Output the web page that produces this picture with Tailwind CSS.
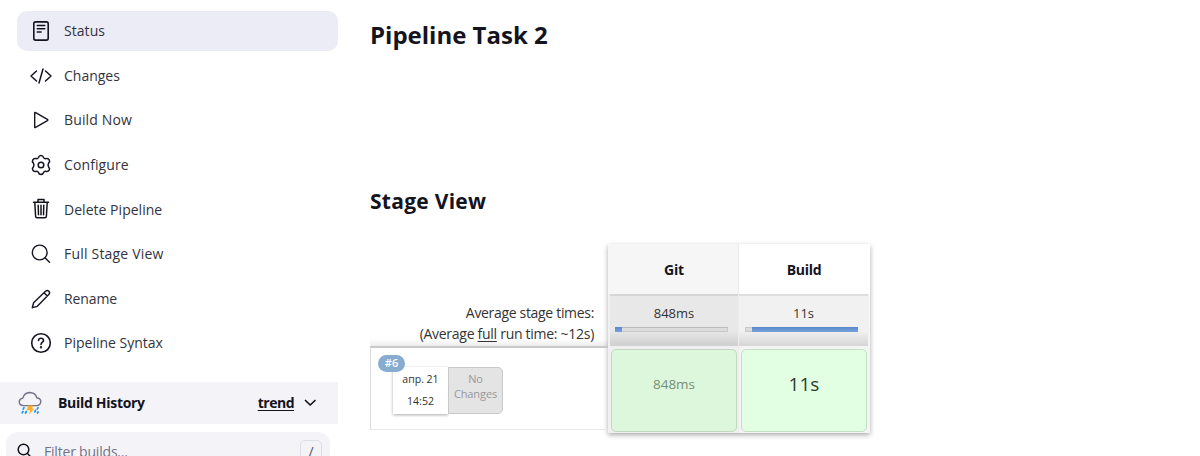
<!DOCTYPE html>
<html lang="en">
<head>
<meta charset="utf-8">
<title>Pipeline Task 2</title>
<script src="https://cdn.jsdelivr.net/npm/@tailwindcss/browser@4"></script>
</head>
<body class="h-[456px] overflow-hidden bg-white font-['Open_Sans','Noto_Sans',sans-serif] text-[#14141f]">
<div class="flex h-[456px] overflow-hidden">
  <aside class="w-[338px] shrink-0 pt-[11px]">
    <nav class="ml-[17px] flex flex-col gap-[4.6px] text-[14px] font-medium text-[#333340]">
      <a class="flex h-10 items-center gap-[11px] rounded-[10px] bg-[#ececf6] pl-3">
        <svg class="size-6 text-[#14141f]" viewBox="0 0 24 24" fill="none" stroke="currentColor" stroke-width="1.6" stroke-linecap="round" stroke-linejoin="round"><rect x="4.8" y="2.9" width="14.4" height="18.2" rx="1.8"/><path d="M8.3 6.5h7.4M8.3 9.7h7.4M8.3 13h3.8"/></svg>
        <span class="pb-px tracking-[0.05px]">Status</span></a>
      <a class="flex h-10 items-center gap-[11px] pl-3">
        <svg class="size-6 text-[#14141f]" viewBox="0 0 24 24" fill="none" stroke="currentColor" stroke-width="1.5" stroke-linecap="round" stroke-linejoin="round"><path d="M7.5 7l-5.5 5 5.5 5M16.5 7l5.5 5-5.500 5M14 5l-4 14"/></svg>
        <span class="tracking-normal">Changes</span></a>
      <a class="flex h-10 items-center gap-[11px] pl-3">
        <svg class="size-6 text-[#14141f]" viewBox="0 0 24 24" fill="none" stroke="currentColor" stroke-width="1.4" stroke-linejoin="round"><path d="M5.7 5.1v13.8q0 1 .9.5l11.8-6.8q.9-.6 0-1.2L6.600 4.600q-.9-.5-.9.5z"/></svg>
        <span class="pb-px tracking-[0.15px]">Build Now</span></a>
      <a class="flex h-10 items-center gap-[11px] pl-3">
        <svg class="size-6 text-[#14141f]" viewBox="0 0 24 24" fill="none" stroke="currentColor" stroke-width="1.5" stroke-linejoin="round"><circle cx="12" cy="12" r="2.800"/><path d="M9.500 4.500Q10 2.500 12 2.500T14.500 4.500Q15.300 6 17 5.600Q19.200 5 20.200 6.800T19.700 9.900Q18.300 12 19.700 14.100Q21.200 15.500 20.200 17.200T17 18.400Q15.300 18 14.500 19.500Q14 21.500 12 21.500T9.500 19.500Q8.700 18 7 18.400Q4.800 19 3.800 17.200T4.300 14.100Q5.700 12 4.300 9.900Q2.800 8.500 3.800 6.800T7 5.600Q8.700 6 9.500 4.500z"/></svg>
        <span class="tracking-[0.1px]">Configure</span></a>
      <a class="flex h-10 items-center gap-[11px] pl-3">
        <svg class="size-6 text-[#14141f]" viewBox="0 0 24 24" fill="none" stroke="currentColor" stroke-width="1.5" stroke-linecap="round" stroke-linejoin="round"><path d="M4.500 5.200h15M9 5V2.600h6V5M5.800 5.500l.8 13.700q.1 1.500 1.500 1.500h7.800q1.400 0 1.500-1.500l.8-13.700M9.200 8.300l.3 9.500M12 8.300v9.500M14.800 8.300l-.3 9.500"/></svg>
        <span class="tracking-[0.03px]">Delete Pipeline</span></a>
      <a class="flex h-10 items-center gap-[11px] pl-3">
        <svg class="size-6 text-[#14141f]" viewBox="0 0 24 24" fill="none" stroke="currentColor" stroke-width="1.4" stroke-linecap="round"><circle cx="10.700" cy="10.500" r="7.400"/><path d="M16.200 16l4.300 4.300"/></svg>
        <span class="tracking-[0.2px]">Full Stage View</span></a>
      <a class="flex h-10 items-center gap-[11px] pl-3">
        <svg class="size-6 text-[#14141f]" viewBox="0 0 24 24" fill="none" stroke="currentColor" stroke-width="1.4" stroke-linecap="round" stroke-linejoin="round"><path d="M3.300 20.700l1.300-5L16.500 4.200Q18.200 2.600 19.900 4.200Q21.400 5.900 19.800 7.500L8.300 19.300zM15 5.700l3.300 3.300"/></svg>
        <span class="tracking-[-0.1px]">Rename</span></a>
      <a class="flex h-10 items-center gap-[11px] pl-3">
        <svg class="size-6 text-[#14141f]" viewBox="0 0 24 24" fill="none" stroke="currentColor" stroke-width="1.600" stroke-linecap="round" stroke-linejoin="round"><circle cx="12" cy="12" r="9.300"/><path d="M9.500 9.500q.2-2.200 2.500-2.200t2.500 2.100c0 1.600-2.500 1.900-2.500 4"/><circle cx="12" cy="16.200" r=".4" fill="currentColor"/></svg>
        <span class="pb-px tracking-normal">Pipeline Syntax</span></a>
    </nav>
    <div class="mt-[19px] flex h-[42px] items-center bg-[#f3f3f8] pl-[18px] pr-5 text-[14px] font-bold">
      <svg class="size-6" viewBox="0 0 24 24" fill="none" stroke-linecap="round" stroke-linejoin="round"><path d="M5.500 14.600Q1.200 14.200 1.200 10.700Q1.500 7.600 4.900 7.100Q6 2 11.700 1.500Q17.500 1.600 18.800 6.800Q22.700 7.500 22.800 10.700Q22.500 14.300 18.500 14.600z" stroke="#737388" stroke-width="1.400"/><path d="M10.200 14.600h5l-1.200 3h2.400l-5.400 5.800 1-4.200H8.500z" fill="#ffae2b"/><path d="M6 16.700l-.8 1.400M4.900 20.500l-.7 1.300M8.300 20.500l-.8 1.500M20 16.700l-.8 1.400M17.500 19.500l-.8 1.400M20 21l-.5 1" stroke="#1697ed" stroke-width="1.700"/></svg>
      <span class="ml-4 pb-0.5 tracking-[-0.3px]">Build History</span>
      <a class="ml-auto pb-0.5 tracking-[-0.5px] underline underline-offset-2">trend</a>
      <svg class="ml-2 size-4" viewBox="0 0 16 16" fill="none" stroke="currentColor" stroke-width="1.700" stroke-linecap="round" stroke-linejoin="round"><path d="M3.500 5.500l4.700 4.500L13 5.500"/></svg>
    </div>
    <div class="ml-1.5 mt-2 flex h-[38px] w-[324px] items-center rounded-t-[12px] bg-[#f3f3f8] pl-2.5 pr-2 text-[14px]">
      <svg class="size-[18px]" viewBox="0 0 18 18" fill="none" stroke="currentColor" stroke-width="1.500" stroke-linecap="round"><circle cx="7.500" cy="7.500" r="5.300"/><path d="M11.500 11.500l3.800 4"/></svg>
      <span class="ml-2.5 tracking-[-0.2px] font-medium text-[#737388]">Filter builds...</span>
      <kbd class="ml-auto flex h-[22px] w-[22px] items-center justify-center rounded-[5px] border border-[#dedee8] font-['Open_Sans',sans-serif] text-[14px] text-[#555566]">/</kbd>
    </div>
  </aside>
  <main class="ml-8 w-[502px] shrink-0">
    <h1 class="mt-[17px] h-9 whitespace-nowrap text-[24px] leading-9 font-bold">Pipeline Task 2</h1>
    <h2 class="mt-[133px] h-8 whitespace-nowrap text-[21px] leading-[30px] font-bold tracking-[0.27px]">Stage View</h2>
    <div class="mt-[26px] flex">
      <div class="w-[238px]">
        <div class="flex h-[102px] flex-col items-end bg-linear-to-b from-white from-93% to-[#ededed] pr-3.5 pt-[58px] text-[14px] leading-[21px] text-[#333]">
          <div class="whitespace-nowrap tracking-[-0.32px]">Average stage times:</div>
          <div class="whitespace-nowrap tracking-[-0.28px]">(Average <span class="underline underline-offset-2">full</span> run time: ~12s)</div>
        </div>
        <div class="relative h-[84px] border-t-2 border-b border-l border-t-[#c8c8c8] border-b-[#e8e8e8] border-l-[#dcdce0] pl-[22px] pt-[19px]">
          <div class="flex h-[47px] w-[110px] text-center">
            <div class="w-[55px] bg-white pt-[3px] text-[10.500px] leading-[22px] text-[#333] shadow-[0_1px_3px_#0005]"><div class="-mt-0.5">апр. 21</div><div>14:52</div></div>
            <div class="w-[55px] rounded-r-[5px] border border-[#c9c9c9] bg-[#e4e4e4] pt-[3px] text-[11px] leading-[15px] tracking-[-0.1px] text-[#999]">No<br>Changes</div>
          </div>
          <span class="absolute left-[7px] top-[7px] flex h-[17px] w-[27px] items-center justify-center rounded-full bg-[#88abd0] text-[11px] font-semibold text-white">#6</span>
        </div>
      </div>
      <div class="flex h-[189px] w-[262px] bg-[#f2f2f2] shadow-[0_2px_5px_#0005]">
        <section class="w-[131px] border-r border-[#ececec] bg-[#f0f0f0] text-center">
          <div class="h-[50px] bg-[#f6f6f6] pl-0.5 text-[14px] leading-[52px] font-bold tracking-[-0.2px]">Git</div>
          <div class="ml-0.5 h-[52px] border-t-2 border-[#d6d6d6] bg-linear-to-b from-[#e8e8e8] from-70% to-[#cfcfcf] pt-[6px] text-[13px] leading-[22px] text-[#333]">848ms
            <div class="ml-[5px] mt-[3px] flex h-[5px] w-[113px] border border-t-[#bbb] border-[#c8c8c8] bg-[#dcdcdc]"><i class="-my-px -ml-px w-[7px] bg-linear-to-b from-[#5788cb] to-[#79a2da]"></i></div>
          </div>
          <div class="ml-[3px] mt-[3px] flex h-[83px] w-[126px] items-center justify-center rounded-[5px] border border-[#bfd8bf] bg-[#ddf7dd] pb-[13px] text-[13.500px] text-[#788f78]">848ms</div>
        </section>
        <section class="w-[131px] bg-[#f4f4f4] text-center">
          <div class="h-[50px] bg-white text-[14px] leading-[52px] font-bold tracking-[-0.3px]"><span class="-ml-px">Build</span></div>
          <div class="mr-0.5 h-[52px] border-t-2 border-[#dedede] bg-linear-to-b from-[#f1f1f1] from-70% to-[#d6d6d6] pt-[6px] text-[13px] leading-[22px] text-[#333]">11s
            <div class="ml-[6px] mt-[3px] flex h-[5px] w-[113px] border border-[#c8c8c8] bg-[#dcdcdc]"><i class="-my-px -mr-px ml-auto w-[106px] bg-linear-to-b from-[#5788cb] to-[#79a2da]"></i></div>
          </div>
          <div class="ml-[2px] mt-[3px] flex h-[83px] w-[126px] items-center justify-center rounded-[5px] border border-[#c4dfc4] bg-[#e3ffe3] pb-[13px] text-[19px] text-[#2c3b2c]">11s</div>
        </section>
      </div>
    </div>
  </main>
</div>
</body>
</html>
